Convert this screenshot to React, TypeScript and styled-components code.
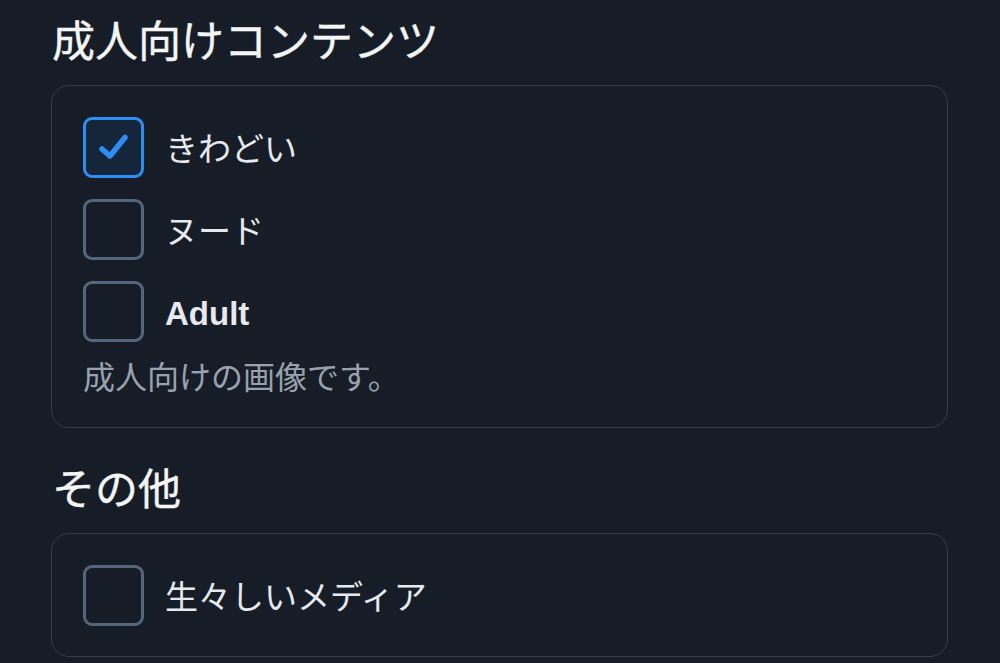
import styled, { createGlobalStyle } from "styled-components";

const GlobalStyle = createGlobalStyle`
  html, body {
    margin: 0;
    padding: 0;
    background: #161d27;
  }
  body {
    font-family: "Liberation Sans", "Noto Sans CJK JP", sans-serif;
    color: #eef1f4;
  }
`;

const Page = styled.div`
  padding: 17px 52px 0 51px;
  height: 663px;
  box-sizing: border-box;
  overflow: hidden;
`;

const SectionTitle = styled.h2<{ $first?: boolean }>`
  margin: ${(p) => (p.$first ? "0" : "37px")} 0 18px 1px;
  font-size: 43px;
  line-height: 50px;
  font-weight: 400;
  color: #f3f5f7;
  -webkit-text-stroke: 0.4px #f3f5f7;
`;

const Card = styled.div`
  border: 1px solid #353e4a;
  border-radius: 18px;
  padding: 31px 31px 30px;
  display: flex;
  flex-direction: column;
  gap: 21px;
`;

const Row = styled.label`
  display: flex;
  align-items: center;
  gap: 21px;
  cursor: pointer;
`;

const Box = styled.span<{ $checked?: boolean }>`
  width: 61px;
  height: 61px;
  box-sizing: border-box;
  border-radius: 9px;
  border: 3px solid ${(p) => (p.$checked ? "#2d8ff3" : "#54667c")};
  background: ${(p) => (p.$checked ? "#16263a" : "transparent")};
  display: flex;
  align-items: center;
  justify-content: center;
  flex-shrink: 0;
`;

const Label = styled.span<{ $bold?: boolean }>`
  font-size: 33px;
  line-height: 44px;
  font-weight: ${(p) => (p.$bold ? 700 : 400)};
  color: #e6e9ee;
  padding-top: 4px;
`;

const Note = styled.div`
  margin: -7px 0 -3px;
  font-size: 32px;
  line-height: 44px;
  color: #98a1ad;
`;

const Check = () => (
  <svg width="32" height="28" viewBox="0 0 32 28" fill="none">
    <path
      d="M4 15 L12 22 L27 3.5"
      stroke="#2d8ef6"
      strokeWidth="5.5"
      strokeLinecap="round"
      strokeLinejoin="round"
    />
  </svg>
);

function Option({ label, checked, bold }: { label: string; checked?: boolean; bold?: boolean }) {
  return (
    <Row>
      <Box $checked={checked}>{checked && <Check />}</Box>
      <Label $bold={bold}>{label}</Label>
    </Row>
  );
}

export default function App() {
  return (
    <>
      <GlobalStyle />
      <Page>
        <SectionTitle $first>成人向けコンテンツ</SectionTitle>
        <Card>
          <Option label="きわどい" checked />
          <Option label="ヌード" />
          <Option label="Adult" bold />
          <Note>成人向けの画像です。</Note>
        </Card>
        <SectionTitle>その他</SectionTitle>
        <Card>
          <Option label="生々しいメディア" />
        </Card>
      </Page>
    </>
  );
}
